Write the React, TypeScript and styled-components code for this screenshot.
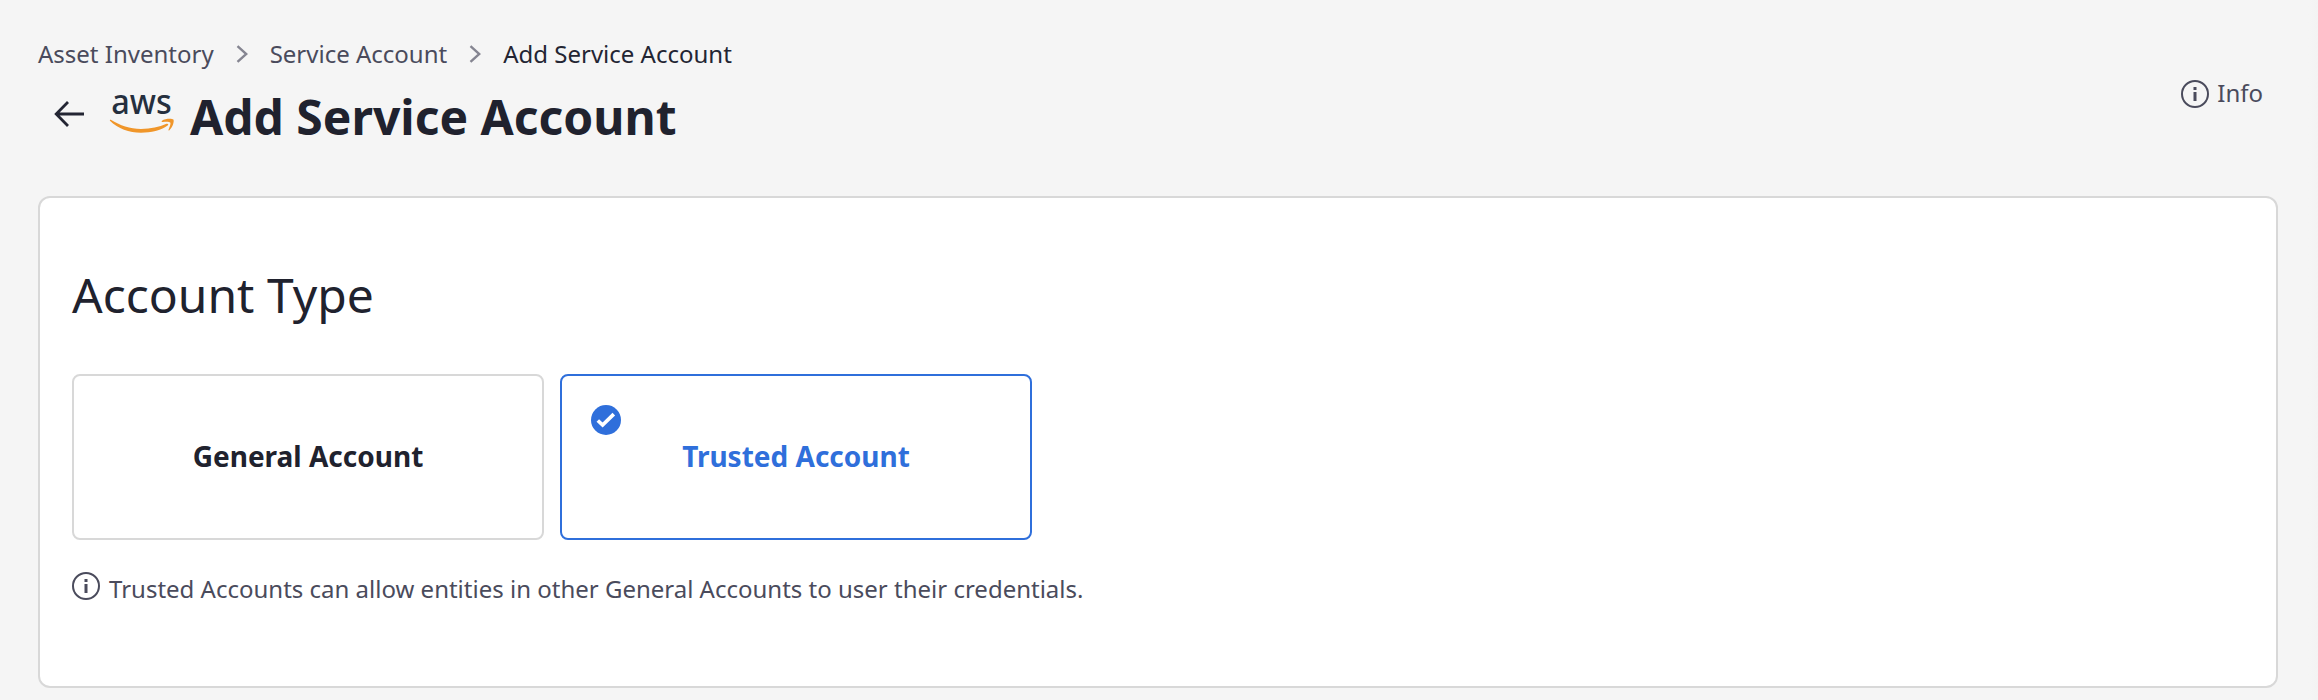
import React from "react";
import styled, { createGlobalStyle } from "styled-components";

const GlobalStyle = createGlobalStyle`
  * { box-sizing: border-box; }
  body { margin: 0; background: #f5f5f5; font-family: "Noto Sans", sans-serif; color: #232533; }
  h1, h2, p { margin: 0; }
`;

const Page = styled.main`
  height: 700px;
  padding: 37px 40px 12px 38px;
  display: flex;
  flex-direction: column;
  overflow: hidden;
  background: linear-gradient(to left, #f3f3f3, #f5f5f5 10px);
`;

const Header = styled.header`
  display: flex;
  justify-content: space-between;
  height: 159px;
`;

const Breadcrumbs = styled.nav`
  display: flex;
  align-items: flex-start;
  height: 33px;
  font-size: 24px;
  line-height: 33px;
`;

const Crumb = styled.span<{ $current?: boolean }>`
  color: ${(p) => (p.$current ? "#232533" : "#4a4b5c")};
  white-space: nowrap;
`;

const Separator = styled.svg`
  width: 12px;
  height: 18px;
  margin: 8px 22px 0;
`;

const TitleRow = styled.div`
  display: flex;
  align-items: flex-start;
  padding-left: 16px;
`;

const BackIcon = styled.svg`
  width: 30px;
  height: 26px;
  margin-top: 31px;
`;

const AwsLogo = styled.svg`
  width: 66px;
  height: 62px;
  margin: 4px 0 0 25px;
  overflow: visible;
  font-family: "Noto Sans", sans-serif;
`;

const Title = styled.h1`
  font-size: 48px;
  line-height: 65px;
  font-weight: 700;
  margin: 14px 0 0 15px;
  color: #20222e;
`;

const InfoLink = styled.div`
  display: flex;
  align-items: flex-start;
  gap: 8px;
  margin: 39px 15px 0 0;
  font-size: 24px;
  line-height: 33px;
  color: #4a4b5c;
`;

const CircleIcon = styled.svg`
  width: 28px;
  height: 28px;
  flex: none;
`;

const InfoIconSlot = styled.span`
  display: flex;
  padding-top: 4px;
`;

const Card = styled.section`
  height: 492px;
  border: 2px solid #d8d8d8;
  border-radius: 12px;
  background: #fff;
  padding: 64px 32px 0;
`;

const CardTitle = styled.h2`
  font-size: 48px;
  line-height: 65px;
  font-weight: 400;
  color: #20222e;
`;

const Options = styled.div`
  display: flex;
  gap: 16px;
  margin-top: 47px;
`;

const Option = styled.div<{ $selected?: boolean }>`
  position: relative;
  display: flex;
  align-items: flex-start;
  justify-content: center;
  width: 472px;
  height: 166px;
  padding-top: 61px;
  border: 2px solid ${(p) => (p.$selected ? "#2f6fdb" : "#d8d8d8")};
  border-radius: 8px;
  font-size: 28px;
  line-height: 38px;
  font-weight: 700;
  color: ${(p) => (p.$selected ? "#2f6fdb" : "#20222e")};
`;

const CheckBadge = styled.svg`
  position: absolute;
  left: 29px;
  top: 29px;
  width: 30px;
  height: 30px;
`;

const Note = styled.p`
  display: flex;
  align-items: flex-start;
  gap: 9px;
  margin-top: 32px;
  font-size: 24px;
  line-height: 33px;
  color: #4a4b5c;
`;

const InfoIcon = () => (
  <CircleIcon viewBox="0 0 28 28" fill="none">
    <circle cx="14" cy="14" r="13" stroke="#4a4b5c" strokeWidth="2" />
    <path d="M14 7v3M14 12v9" stroke="#4a4b5c" strokeWidth="3" />
  </CircleIcon>
);

const Chevron = () => (
  <Separator viewBox="0 0 12 18" fill="none">
    <path d="M1.500 1.200 10.300 9l-8.800 7.800" stroke="#858591" strokeWidth="2.400" />
  </Separator>
);

export default function App() {
  return (
    <>
      <GlobalStyle />
      <Page>
        <Header>
          <div>
            <Breadcrumbs>
              <Crumb>Asset Inventory</Crumb>
              <Chevron />
              <Crumb>Service Account</Crumb>
              <Chevron />
              <Crumb $current>Add Service Account</Crumb>
            </Breadcrumbs>
            <TitleRow>
              <BackIcon viewBox="0 0 30 26" fill="none">
                <path d="M30 13H2.200M14 1 2.200 13l11.800 12" stroke="#232533" strokeWidth="2.800" />
              </BackIcon>
              <AwsLogo viewBox="0 -14 66 62">
                <text x="2.2" y="26.4" fontSize="34.5" fontWeight="500" textLength="60.5" lengthAdjust="spacingAndGlyphs" fill="#252f3e">aws</text>
                <path d="M1.800 31.800C11 37.500 21 40.900 32 40.900C42 40.900 50 39 57.500 35.800C59 35.200 60 36.600 58.600 37.600C52 42.500 42 44.800 32 44.800C20 44.800 9 40.600 1.200 33C.5 32.200.9 31.300 1.800 31.800Z" fill="#f0962a" />
                <path d="M53 32.800C56 30.600 63 30.400 64.400 31.600C65.600 33.500 63.400 39.800 60.400 42.300C59.700 42.800 59.200 42.500 59.500 41.800C60.700 39 62 35.600 61.200 34.600C60.200 33.500 56.500 33.800 53.800 34.100C52.600 34.200 52.200 33.400 53 32.800Z" fill="#f0962a" />
              </AwsLogo>
              <Title>Add Service Account</Title>
            </TitleRow>
          </div>
          <InfoLink>
            <InfoIconSlot>
              <InfoIcon />
            </InfoIconSlot>
            <span>Info</span>
          </InfoLink>
        </Header>
        <Card>
          <CardTitle>Account Type</CardTitle>
          <Options>
            <Option>General Account</Option>
            <Option $selected>
              <CheckBadge viewBox="0 0 30 30" fill="none">
                <circle cx="15" cy="15" r="15" fill="#2f6fdb" />
                <path d="m6.800 15.500 4.800 4.500L22.800 9.200" stroke="#fff" strokeWidth="3.700" />
              </CheckBadge>
              Trusted Account
            </Option>
          </Options>
          <Note>
            <InfoIcon />
            <span>Trusted Accounts can allow entities in other General Accounts to user their credentials.</span>
          </Note>
        </Card>
      </Page>
    </>
  );
}
